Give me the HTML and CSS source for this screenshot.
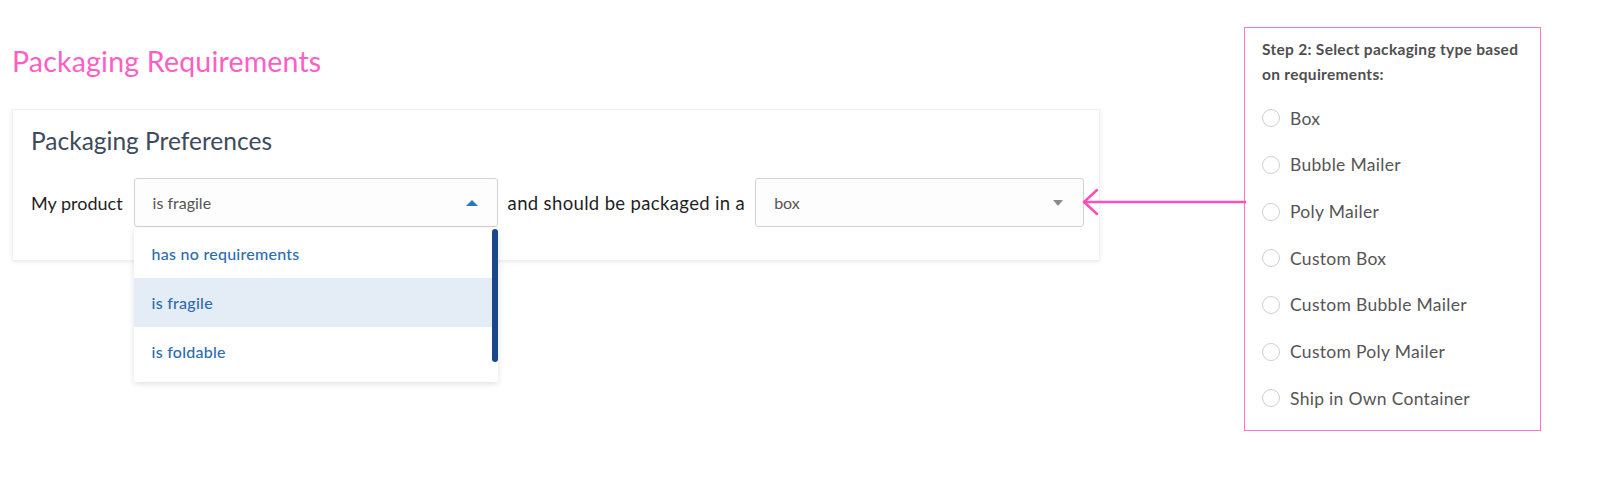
FILE: index.html
```html
<!DOCTYPE html>
<html lang="en">
<head>
<meta charset="utf-8">
<title>Packaging Requirements</title>
<link rel="stylesheet" href="styles.css">
</head>
<body>
<div class="page">
  <main class="main">
    <h1 class="title">Packaging Requirements</h1>
    <section class="card">
      <h2 class="card-title">Packaging Preferences</h2>
      <div class="row">
        <span class="label label-first">My product</span>
        <div class="select-wrap sel-req">
          <div class="select open">
            <span class="value">is fragile</span>
            <span class="caret caret-up"></span>
          </div>
          <ul class="menu">
            <li class="option">has no requirements</li>
            <li class="option active">is fragile</li>
            <li class="option">is foldable</li>
            <li class="scrollbar"></li>
          </ul>
        </div>
        <span class="label label-mid">and should be packaged in a</span>
        <div class="select-wrap sel-type">
          <div class="select">
            <span class="value">box</span>
            <span class="caret caret-down"></span>
          </div>
        </div>
      </div>
    </section>
  </main>
  <svg class="arrow" width="164" height="28" viewBox="0 0 164 28">
    <line x1="2" y1="14" x2="164" y2="14" stroke="#ff4fba" stroke-width="2.5"/>
    <polyline points="15,2 2,14 15,26" fill="none" stroke="#ff4fba" stroke-width="2.5" stroke-linecap="round" stroke-linejoin="round"/>
  </svg>
  <aside class="panel">
    <p class="panel-title">Step 2: Select packaging type based on requirements:</p>
    <ul class="radios">
      <li class="radio"><span class="circle"></span>Box</li>
      <li class="radio"><span class="circle"></span>Bubble Mailer</li>
      <li class="radio"><span class="circle"></span>Poly Mailer</li>
      <li class="radio"><span class="circle"></span>Custom Box</li>
      <li class="radio"><span class="circle"></span>Custom Bubble Mailer</li>
      <li class="radio"><span class="circle"></span>Custom Poly Mailer</li>
      <li class="radio"><span class="circle"></span>Ship in Own Container</li>
    </ul>
  </aside>
</div>
</body>
</html>
```

FILE: styles.css
```css
* { box-sizing: border-box; }
html, body { margin: 0; padding: 0; background: #ffffff; }
body {
  font-family: Lato, "Open Sans", "Liberation Sans", sans-serif;
  color: #1f1f1f;
}
.page {
  position: relative;
  display: flex;
  align-items: flex-start;
  padding: 27px 0 0 12px;
  height: 488px;
}
.main {
  width: 1088px;
  flex: none;
  padding-top: 17px;
}
.title {
  margin: 0;
  font-size: 28.5px;
  letter-spacing: 0.2px;
  line-height: 34px;
  font-weight: 400;
  color: #ff5ec4;
}
.card {
  margin-top: 31px;
  background: #fff;
  border: 1px solid #f0f0f0;
  box-shadow: 0 1px 4px rgba(0,0,0,0.08);
  padding: 16px 12px 30px 18px;
  height: 152px;
}
.card-title {
  margin: 0;
  font-size: 24.5px;
  line-height: 30px;
  font-weight: 400;
  color: #3d4a5b;
}
.row {
  display: flex;
  align-items: center;
  margin-top: 22px;
  gap: 10px;
}
.label {
  flex: none;
  white-space: nowrap;
  font-size: 18.5px;
  color: #1f1f1f;
}
.label-first { font-size: 18px; margin-right: 1px; }
.label-mid { letter-spacing: 0.35px; }
.select-wrap { position: relative; flex: none; }
.sel-req { width: 364px; }
.sel-type { width: 329px; }
.select {
  display: flex;
  align-items: center;
  justify-content: space-between;
  height: 49px;
  padding: 0 19px 0 18px;
  border: 1px solid #d2d2d2;
  border-radius: 3px;
  background: #fdfdfd;
  font-size: 16px;
  color: #555;
}
.caret {
  width: 0;
  height: 0;
  border-left: 6.5px solid transparent;
  border-right: 6.5px solid transparent;
}
.caret-up { border-bottom: 6px solid #2a78bf; }
.caret-down {
  border-left-width: 5.5px;
  border-right-width: 5.5px;
  border-top: 6px solid #8c8c8c;
  margin-right: 1px;
}
.menu {
  position: absolute;
  top: 50px;
  left: 0;
  width: 364px;
  height: 154px;
  margin: 0;
  padding: 0 0 6px;
  list-style: none;
  background: #fff;
  border-radius: 3px;
  box-shadow: 0 2px 6px rgba(0,0,0,0.12);
  z-index: 2;
}
.option {
  height: 49px;
  display: flex;
  align-items: center;
  padding-left: 18px;
  font-size: 16px;
  letter-spacing: 0.25px;
  font-weight: 500;
  color: #2c6cb2;
}
.option:first-child { height: 50px; }
.option.active { background: #e4ecf5; }
.scrollbar {
  position: absolute;
  top: 1px;
  right: 0;
  width: 6px;
  height: 133px;
  border-radius: 3px;
  background: #1a468a;
}
.arrow {
  position: absolute;
  left: 1082px;
  top: 188px;
}
.panel {
  margin-left: 144px;
  flex: none;
  width: 297px;
  height: 404px;
  border: 1.5px solid #ff74d0;
  padding: 9px 16px 0 17px;
  background: #fff;
}
.panel-title {
  margin: 0;
  font-size: 15.5px;
  letter-spacing: 0.3px;
  line-height: 25px;
  font-weight: 700;
  color: #4f4f4f;
}
.radios {
  list-style: none;
  margin: 8px 0 0;
  padding: 0;
}
.radio {
  display: flex;
  align-items: center;
  height: 46.67px;
  font-size: 17.5px;
  letter-spacing: 0.3px;
  color: #555;
}
.circle {
  width: 18px;
  height: 18px;
  border: 1px solid #cfcfcf;
  border-radius: 50%;
  background: #fff;
  margin-right: 10px;
  flex: none;
}
```
